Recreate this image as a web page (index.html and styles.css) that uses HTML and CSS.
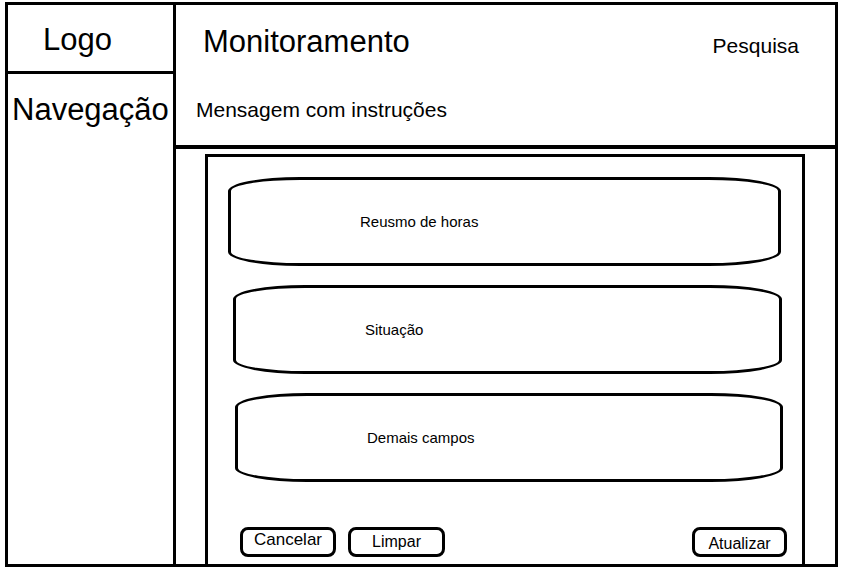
FILE: index.html
```html
<!DOCTYPE html>
<html lang="pt-BR">
  <head>
    <meta charset="UTF-8" />
    <meta name="viewport" content="width=device-width, initial-scale=1.0" />
    <title>Monitoramento</title>
    <link rel="stylesheet" href="styles.css">
  </head>
  <body>
    <div class="frame">
      <aside class="sidebar">
        <div class="logo">Logo</div>
        <nav class="nav">Navegação</nav>
      </aside>
      <main class="main">
        <header class="header">
          <div class="header-top">
            <h1 class="title">Monitoramento</h1>
            <span class="search">Pesquisa</span>
          </div>
          <p class="message">Mensagem com instruções</p>
        </header>
        <section class="content">
          <div class="panel">
            <div class="pill pill-first">Reusmo de horas</div>
            <div class="pill pill-second">Situação</div>
            <div class="pill pill-third">Demais campos</div>
            <div class="actions">
              <button type="button" class="btn btn-cancel">Cancelar</button>
              <button type="button" class="btn btn-clear">Limpar</button>
              <button type="button" class="btn btn-update">Atualizar</button>
            </div>
          </div>
        </section>
      </main>
    </div>
  </body>
</html>
```

FILE: styles.css
```css
* {
  box-sizing: border-box;
  font-family: "Liberation Sans", Arial, sans-serif;
  color: #000;
}
body {
  margin: 0;
  background: #fff;
}
.frame {
  margin: 2px 0 0 5px;
  width: 833px;
  height: 565px;
  border: 3px solid #000;
  display: grid;
  grid-template-columns: 168px 1fr;
}
/* left column */
.sidebar {
  border-right: 3px solid #000;
  display: flex;
  flex-direction: column;
}
.logo {
  height: 69px;
  border-bottom: 3px solid #000;
  padding: 17px 0 0 35px;
  font-size: 31px;
  line-height: 36px;
}
.nav {
  padding: 18px 0 0 4px;
  font-size: 31px;
  line-height: 36px;
}
/* right column */
.main {
  display: flex;
  flex-direction: column;
  min-height: 0;
}
.header {
  height: 144px;
  border-bottom: 4px solid #000;
  padding-top: 19px;
}
.header-top {
  display: flex;
  align-items: baseline;
  justify-content: space-between;
  padding: 0 36px 0 27px;
}
.title {
  margin: 0;
  font-size: 31px;
  font-weight: 400;
  line-height: 36px;
}
.search {
  font-size: 21px;
  line-height: 24px;
  position: relative;
  top: 1px;
}
.message {
  margin: 38px 0 0 20px;
  font-size: 21px;
  line-height: 24px;
}
.content {
  flex: 1;
  display: flex;
  padding: 5px 30px 0 29px;
}
.panel {
  flex: 1;
  display: flex;
  flex-direction: column;
  gap: 19px;
  border: 3px solid #000;
  border-bottom: none;
  padding-top: 20px;
}
.pill {
  height: 89px;
  border: 3px solid #000;
  border-radius: 72px / 14px;
  display: flex;
  align-items: center;
  padding-left: 129px;
  font-size: 15px;
}
.pill-first {
  margin: 0 21px 0 20px;
}
.pill-second {
  margin: 0 20px 0 25px;
}
.pill-third {
  margin: 0 19px 0 27px;
}
.actions {
  margin-top: auto;
  display: flex;
  gap: 12px;
  padding: 0 15px 7px 32px;
}
.btn {
  width: 96px;
  height: 30px;
  padding: 0;
  border: 3px solid #000;
  border-radius: 8px;
  background: #fff;
  font-size: 16px;
}
.btn-cancel {
  font-size: 17px;
  padding-bottom: 5px;
}
.btn-clear {
  width: 97px;
  font-size: 16px;
}
.btn-update {
  width: 95px;
  margin-left: auto;
  padding-top: 3px;
}
```
